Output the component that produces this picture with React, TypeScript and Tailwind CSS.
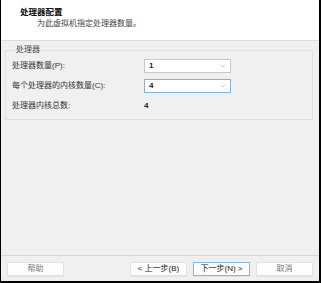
import { ChevronDown } from "lucide-react"

const font = { fontFamily: '"Liberation Sans", "Noto Sans CJK SC", sans-serif' }

function Select({ value, focused }: { value: string; focused?: boolean }) {
  return (
    <div
      className={`flex items-center justify-between w-[87px] h-[14px] bg-white border pl-[4px] pr-[3px] ${
        focused ? "border-[#7fb2e5]" : "border-[#c9c9c9]"
      }`}
    >
      <span className="text-[8px] font-bold leading-none text-[#222]">{value}</span>
      <ChevronDown className="w-[8px] h-[8px] text-[#9a9a9a]" strokeWidth={1.5} />
    </div>
  )
}

function Btn({ children, primary, dim }: { children: React.ReactNode; primary?: boolean; dim?: boolean }) {
  return (
    <button
      className={`w-[57px] h-[14px] flex items-center justify-center bg-[#fdfdfd] border text-[8px] leading-none shadow-[0_1px_0_rgba(0,0,0,0.06)] ${
        primary ? "border-[#86b6e6]" : "border-[#e2e2e2]"
      } ${dim ? "text-[#777]" : "text-[#222]"}`}
    >
      {children}
    </button>
  )
}

export default function App() {
  return (
    <div
      className="w-[321px] h-[283px] flex flex-col bg-[#f0f0f0] border-l border-r-2 border-b-2 border-black"
      style={font}
    >
      {/* Header */}
      <div className="h-[41px] shrink-0 bg-white border-b border-[#dcdcdc] pl-[19px] pt-[7px]">
        <div className="text-[8.5px] font-bold leading-[10px] text-[#111]">处理器配置</div>
        <div className="pl-[17px] mt-[2px] text-[8px] leading-[10px] text-[#444]">为此虚拟机指定处理器数量。</div>
      </div>

      {/* Body */}
      <div className="flex-1 pl-[4px] pr-[6px] pt-[4px]">
        <fieldset className="border border-[#dedede] px-[6px] pt-[4px] pb-[6px]">
          <legend className="ml-[3px] px-[1px] text-[8px] leading-[10px] text-[#444]">处理器</legend>
          <div className="flex flex-col gap-[6px]">
            <div className="flex items-center h-[14px]">
              <span className="w-[132px] text-[8px] text-[#333]">处理器数量(P):</span>
              <Select value="1" />
            </div>
            <div className="flex items-center h-[14px]">
              <span className="w-[132px] text-[8px] text-[#333]">每个处理器的内核数量(C):</span>
              <Select value="4" focused />
            </div>
            <div className="flex items-center h-[14px]">
              <span className="w-[132px] text-[8px] text-[#333]">处理器内核总数:</span>
              <span className="text-[8px] font-bold text-[#222]">4</span>
            </div>
          </div>
        </fieldset>
      </div>

      {/* Footer */}
      <div className="h-[26px] shrink-0 border-t border-[#d6d6d6] flex items-start pt-[6px] px-[6px]">
        <Btn dim>帮助</Btn>
        <div className="flex-1" />
        <div className="flex gap-[6px]">
          <Btn>&lt; 上一步(B)</Btn>
          <Btn primary>下一步(N) &gt;</Btn>
          <Btn dim>取消</Btn>
        </div>
      </div>
    </div>
  )
}
